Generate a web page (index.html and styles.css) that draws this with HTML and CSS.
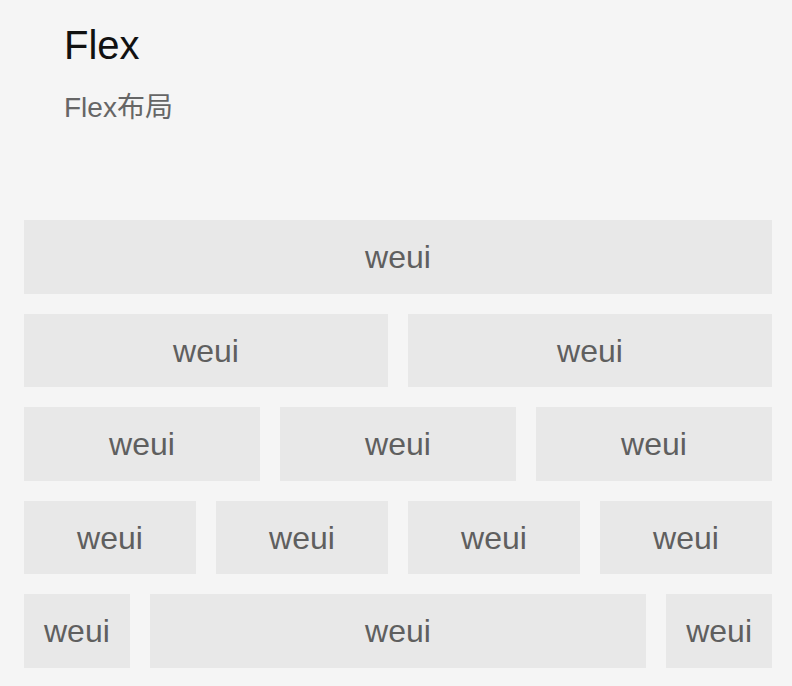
FILE: index.html
```html
<!DOCTYPE html>
<html lang="zh-CN">
<head>
<meta charset="utf-8">
<title>Flex</title>
<link rel="stylesheet" href="styles.css">
</head>
<body>
<div class="page">
  <div class="page-hd">
    <h1 class="page-title">Flex</h1>
    <p class="page-desc">Flex布局</p>
  </div>
  <div class="page-bd">
    <div class="flex-row">
      <div class="item grow">weui</div>
    </div>
    <div class="flex-row">
      <div class="item grow">weui</div>
      <div class="item grow">weui</div>
    </div>
    <div class="flex-row">
      <div class="item grow">weui</div>
      <div class="item grow">weui</div>
      <div class="item grow">weui</div>
    </div>
    <div class="flex-row">
      <div class="item grow">weui</div>
      <div class="item grow">weui</div>
      <div class="item grow">weui</div>
      <div class="item grow">weui</div>
    </div>
    <div class="flex-row">
      <div class="item">weui</div>
      <div class="item grow">weui</div>
      <div class="item">weui</div>
    </div>
  </div>
</div>
</body>
</html>
```

FILE: styles.css
```css
html, body {
  margin: 0;
  padding: 0;
  background: #f5f5f5;
}
body {
  font-family: "Liberation Sans", "Noto Sans CJK SC", sans-serif;
}
.page {
  padding: 0 20px 0 24px;
}
.page-hd {
  padding: 17px 40px 0;
}
.page-title {
  margin: 0;
  font-size: 40px;
  font-weight: 400;
  line-height: 56px;
  color: #111111;
}
.page-desc {
  margin: 15px 0 0;
  font-size: 28px;
  line-height: 39px;
  color: #666666;
}
.page-bd {
  margin-top: 93px;
  display: flex;
  flex-direction: column;
  gap: 20px;
}
.flex-row {
  display: flex;
  gap: 20px;
}
.item {
  height: 73.6px;
  line-height: 75px;
  padding: 0 20px;
  background: #e8e8e8;
  color: #5f5f5f;
  font-size: 32px;
  text-align: center;
  white-space: nowrap;
}
.grow {
  flex: 1 1 0;
}
```
